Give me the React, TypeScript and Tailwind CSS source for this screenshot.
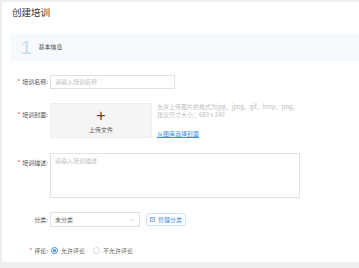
import React from "react";

const font = { fontFamily: '"Noto Sans CJK SC", "Liberation Sans", sans-serif' };

function Label({ req, text }: { req?: boolean; text: string }) {
  return (
    <div className="w-[48px] shrink-0 flex justify-end items-center text-[6px] text-[#555] pr-[2px] leading-none">
      {req && <span className="text-[#f04a4a] mr-[2px]">*</span>}
      <span>{text}</span>
    </div>
  );
}

export default function App() {
  return (
    <div className="w-[359px] h-[268px] bg-[#efefef] pt-[2px] pl-[2px] overflow-hidden" style={font}>
      <div className="bg-white h-[260px] flex flex-col">
        <div className="pl-[10px] pt-[6px] h-[31px] text-[9.5px] text-[#333] leading-none">创建培训</div>
        <div className="ml-[8px] h-[28px] bg-[#f6f9fd] flex items-center pl-[11px]">
          <span className="text-[19px] font-light text-[#c6ddf2] leading-none" style={{ fontFamily: '"Liberation Sans", sans-serif' }}>1</span>
          <span className="ml-[7px] text-[6px] text-[#444] leading-none">基本信息</span>
        </div>
        <div className="flex items-center mt-[14px]">
          <Label req text="培训名称:" />
          <div className="w-[125px] h-[14px] border border-[#e2e2e2] flex items-center px-[4px] text-[6px] text-[#c0c0c0] leading-none">请输入培训名称</div>
        </div>
        <div className="flex items-start mt-[14px]">
          <div className="pt-[9px] flex"><Label req text="培训封面:" /></div>
          <div className="w-[102px] h-[35px] bg-[#f5f5f5] border border-[#eeeeee] flex flex-col items-center justify-center">
            <span className="text-[16px] text-[#444] leading-none font-light" style={{ fontFamily: '"Liberation Sans", sans-serif' }}>+</span>
            <span className="text-[6px] text-[#555] leading-none mt-[3px]">上传文件</span>
          </div>
          <div className="ml-[5px] flex flex-col text-[6px] text-[#bdbdbd] leading-[8px]">
            <span>允许上传图片的格式为jpg、jpeg、gif、bmp、png。</span>
            <span>建议尺寸大小：680 x 240</span>
            <span className="mt-[11px] text-[#3d8be0] underline">从图库选择封面</span>
          </div>
        </div>
        <div className="flex items-start mt-[15px]">
          <div className="pt-[7px] flex"><Label req text="培训描述:" /></div>
          <div className="w-[250px] h-[45px] border border-[#e2e2e2] px-[4px] pt-[4px] text-[6px] text-[#c0c0c0] leading-none">请输入培训描述</div>
        </div>
        <div className="flex items-center mt-[14px]">
          <Label text="分类:" />
          <div className="w-[90px] h-[15px] border border-[#e2e2e2] flex items-center justify-between px-[4px] text-[6px] text-[#666] leading-none">
            <span>未分类</span>
            <svg width="5" height="4" viewBox="0 0 10 6"><path d="M1 1l4 4 4-4" stroke="#bbb" fill="none" strokeWidth="1.2" /></svg>
          </div>
          <div className="ml-[6px] h-[13px] px-[3px] border border-[#cfe3f6] rounded-[3px] flex items-center gap-[3px] text-[6px] text-[#4a8fd8] leading-none">
            <svg width="5" height="5" viewBox="0 0 10 10"><rect x="1" y="1" width="8" height="8" fill="none" stroke="#4a8fd8" strokeWidth="1.3" /><path d="M3 4h4M3 6h4" stroke="#4a8fd8" strokeWidth="1" /></svg>
            <span>管理分类</span>
          </div>
        </div>
        <div className="flex items-center mt-[20px]">
          <Label req text="评论:" />
          <div className="flex items-center gap-[3px] ml-[1px]">
            <span className="w-[7px] h-[7px] rounded-full border border-[#3d8be0] flex items-center justify-center">
              <span className="w-[3px] h-[3px] rounded-full bg-[#3d8be0]" />
            </span>
            <span className="text-[6px] text-[#666] leading-none">允许评论</span>
          </div>
          <div className="flex items-center gap-[3px] ml-[8px]">
            <span className="w-[7px] h-[7px] rounded-full border border-[#dcdcdc]" />
            <span className="text-[6px] text-[#666] leading-none">不允许评论</span>
          </div>
        </div>
      </div>
    </div>
  );
}
